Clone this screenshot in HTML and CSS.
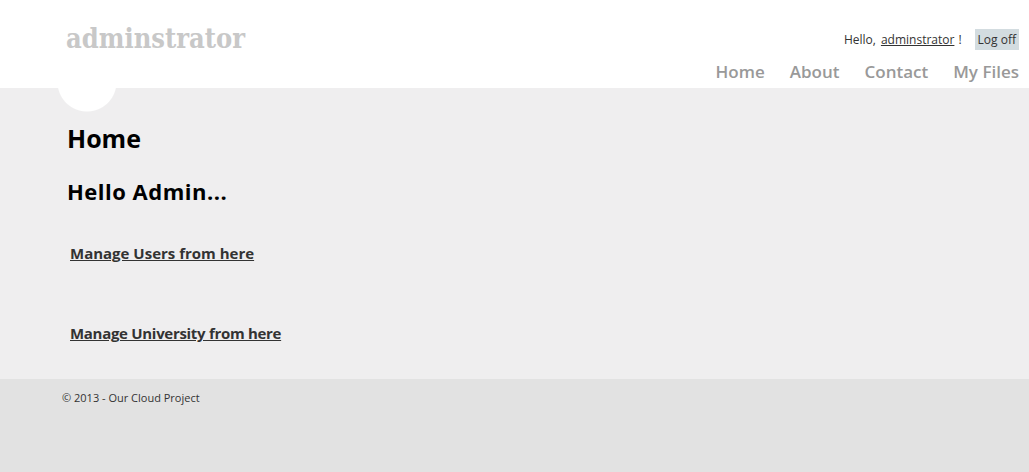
FILE: index.html
```html
<!DOCTYPE html>
<html>
<head>
<meta charset="utf-8">
<title>Home</title>
<link rel="stylesheet" href="styles.css">
</head>
<body>
<header class="site-header">
  <div class="site-title">adminstrator</div>
  <div class="header-right">
    <div class="login">
      Hello, <a class="username" href="#">adminstrator</a> ! <a class="logoff" href="#">Log off</a>
    </div>
    <nav class="menu">
      <a href="#">Home</a>
      <a href="#">About</a>
      <a href="#">Contact</a>
      <a href="#">My Files</a>
    </nav>
  </div>
</header>
<main class="body">
  <div class="main-content">
    <h1 class="title">Home</h1>
    <h2 class="greeting">Hello Admin...</h2>
    <a class="manage" href="#">Manage Users from here</a>
    <a class="manage" href="#">Manage University from here</a>
  </div>
</main>
<footer class="site-footer">
  <p>&copy; 2013 - Our Cloud Project</p>
</footer>
</body>
</html>
```

FILE: styles.css
```css
html, body {
  margin: 0;
  padding: 0;
}
body {
  font-family: "Open Sans", "Noto Sans", sans-serif;
  color: #333;
  background: #e2e2e2;
  height: 472px;
  display: flex;
  flex-direction: column;
}
a { color: #333; }

.site-header {
  background: #fff;
  height: 88px;
  box-sizing: border-box;
  display: flex;
  justify-content: space-between;
  padding: 0 10px 0 66px;
}
.site-title {
  font-family: "DejaVu Serif", serif;
  font-stretch: condensed;
  font-weight: bold;
  font-size: 27px;
  color: #c8c8c8;
  padding-top: 23px;
}
.header-right {
  display: flex;
  flex-direction: column;
  align-items: flex-end;
  padding-top: 29px;
}
.login {
  font-size: 12px;
  line-height: 21px;
  display: flex;
  align-items: center;
  gap: 5px;
}
.login .username { margin-right: -1px; }
.logoff {
  background: #d3dce0;
  text-decoration: none;
  padding: 0 3px;
  margin-left: 8px;
  height: 21px;
  line-height: 21px;
}
.menu {
  display: flex;
  gap: 25px;
  margin-top: 11px;
}
.menu a {
  color: #999;
  text-decoration: none;
  font-size: 17px;
  font-weight: 600;
  line-height: 22px;
}

.body {
  background: #efeeef;
  height: 291px;
  flex: none;
}
.main-content {
  margin-left: 57px;
  padding: 34px 0 0 10px;
  background: radial-gradient(circle 30px at 30px -6px, #fff 29px, rgba(255,255,255,0) 30px) no-repeat;
  display: flex;
  flex-direction: column;
  align-items: flex-start;
}
.title {
  margin: 0;
  font-size: 25px;
  line-height: 32px;
  color: #000;
}
.greeting {
  margin: 23px 0 0;
  font-size: 22px;
  line-height: 29px;
  letter-spacing: 0.5px;
  color: #000;
}
.manage {
  font-size: 15px;
  font-weight: bold;
  margin-left: 3px;
  line-height: 20px;
}
.manage:first-of-type { margin-top: 37px; }
.manage + .manage { margin-top: 60px; }
.manage + .manage { letter-spacing: -0.3px; }

.site-footer {
  flex: 1;
  background: #e2e2e2;
  padding-left: 62px;
}
.site-footer p {
  margin: 11px 0 0;
  font-size: 11px;
}
```
